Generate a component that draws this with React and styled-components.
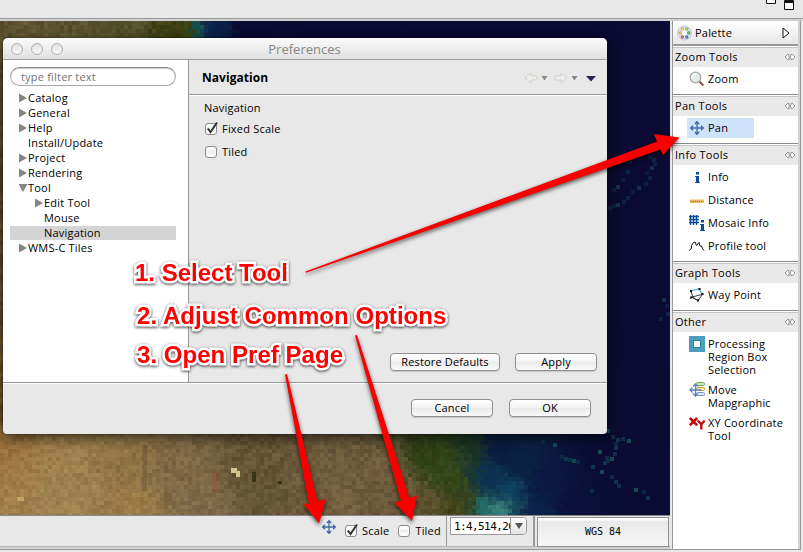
import React from "react";
import styled, { createGlobalStyle } from "styled-components";

const Global = createGlobalStyle`
  * { box-sizing: border-box; }
  body { margin: 0; overflow: hidden; background: #e8e8e8; }
`;

const Window = styled.div`
  position: relative;
  width: 803px;
  height: 552px;
  background: #e8e8e8;
  color: #000;
  font: 11px/15px "Open Sans", "Noto Sans", sans-serif;
  letter-spacing: 0.2px;
  white-space: nowrap;
  overflow: hidden;
`;
const Label = styled.span`
  font-size: ${(p) => p.$size || 11}px;
  letter-spacing: ${(p) => (p.$track === undefined ? 0.2 : p.$track)}px;
  font-weight: ${(p) => (p.$bold ? 700 : 400)};
  color: ${(p) => p.$color || "#000"};
`;
const TopBar = styled.header`
  height: 21px;
  display: flex;
  justify-content: flex-end;
  border-bottom: 2px solid #d0d0d0;
  box-shadow: inset 0 -1px #999;
  padding-right: 7px;
`;
const Workbench = styled.main`
  display: flex;
  width: 801px;
  height: 529px;
  border-right: 1px solid #999;
  border-bottom: 1px solid #999;
`;
const Editor = styled.section`
  width: 670px;
  display: flex;
  flex-direction: column;
`;
const MapView = styled.div`
  position: relative;
  height: 494px;
  overflow: hidden;
  background: #0a0a34;
`;
const MapCanvas = styled.svg`
  display: block;
`;

/* Terrain: colours blended between sampled places, [x, y, r, g, b, reach] */
const TERRAIN = [
  [0, 4, 94, 84, 48, 1], [70, 10, 88, 82, 47, 1], [130, 4, 84, 82, 42, 1], [165, 10, 60, 62, 18, 1],
  [183, 10, 58, 66, 14, 0.5], [196, 8, 18, 84, 82, 0.35], [210, 8, 10, 34, 80, 0.6], [223, 6, 12, 32, 74, 0.4],
  [245, 8, 10, 10, 50, 1], [400, 8, 10, 10, 50, 3], [660, 8, 10, 10, 50, 3],
  [0, 120, 86, 72, 42, 1], [0, 260, 98, 78, 42, 1.3], [0, 380, 110, 84, 46, 1],
  [640, 120, 10, 10, 50, 3], [640, 260, 10, 10, 50, 3], [640, 380, 10, 12, 50, 2],
  [0, 425, 154, 112, 62, 1], [20, 455, 162, 124, 74, 1], [60, 470, 158, 130, 80, 1.3], [120, 440, 145, 118, 70, 1], [130, 485, 156, 126, 74, 1],
  [180, 455, 126, 104, 68, 1], [200, 485, 126, 106, 72, 1], [255, 440, 100, 84, 52, 1], [260, 480, 102, 86, 56, 1],
  [320, 445, 110, 92, 60, 1], [330, 485, 116, 96, 62, 1], [380, 450, 112, 92, 62, 1], [400, 480, 108, 90, 58, 1], [425, 484, 92, 80, 46, 0.9],
  [425, 430, 48, 62, 22, 0.9], [440, 440, 48, 72, 24, 0.8], [455, 455, 54, 72, 24, 0.8], [450, 485, 70, 70, 26, 0.8],
  [466, 480, 50, 64, 28, 0.5], [468, 425, 26, 52, 34, 0.7], [468, 450, 26, 54, 46, 0.6], [480, 485, 34, 108, 108, 0.55], [497, 488, 58, 132, 124, 0.6],
  [485, 455, 10, 48, 84, 0.8], [510, 465, 14, 66, 98, 0.6], [515, 484, 20, 70, 90, 0.5], [520, 440, 10, 34, 66, 0.9], [500, 425, 10, 28, 62, 0.8],
  [535, 488, 10, 34, 74, 0.9], [550, 460, 10, 24, 66, 1], [580, 480, 10, 16, 58, 1.2], [610, 450, 10, 12, 50, 1.2], [655, 480, 10, 10, 50, 2],
];
const rand = (x, y) => {
  const n = Math.sin(x * 127.1 + y * 311.7) * 43758.5453;
  return n - Math.floor(n);
};
const shade = (x, y) => {
  let r = 0, g = 0, b = 0, total = 0;
  const jx = x + (rand(x + 3, y) - 0.5) * 9;
  const jy = y + (rand(x, y + 7) - 0.5) * 9;
  for (const [px, py, pr, pg, pb, reach] of TERRAIN) {
    const d = ((jx - px) ** 2 + (jy - py) ** 2) / (reach * reach) + 130;
    const w = 1 / (d * d);
    r += pr * w; g += pg * w; b += pb * w; total += w;
  }
  r /= total; g /= total; b /= total;
  const land = Math.min(1, Math.max(0.04, (r - 10) / 70));
  const n = (rand(x, y) - 0.5) * 20 + (rand(Math.floor((x + y / 2) / 11), Math.floor(y / 9)) - 0.5) * 7;
  return `rgb(${[r + n * land, g + n * land, b + n * 0.7 * land].map((v) => Math.max(0, Math.round(v))).join(",")})`;
};
const cells = [];
for (let y = 0; y < 494; y += 4)
  for (let x = 0; x < 670; x += 4)
    if (y < 20 || y > 408 || x < 4 || x > 600) cells.push([x, y, shade(x, y)]);

/* Reefs and islands: [x, y] */
const REEFS = [
  [640, 153], [632, 154], [636, 153], [648, 155], [652, 158], [653, 162], [650, 166], [645, 171], [648, 176], [644, 182], [637, 186], [631, 190], [626, 196], [622, 200], [616, 203], [612, 204], [608, 206],
  [612, 188], [616, 185], [621, 178], [626, 170], [628, 160], [662, 298], [665, 304], [666, 312], [659, 317],
  [606, 429], [611, 435], [616, 438], [621, 437], [627, 439], [614, 442], [614, 446], [613, 452], [610, 457], [606, 459], [603, 461],
  [541, 440], [553, 443], [560, 455], [564, 457], [568, 458], [572, 459], [576, 460], [591, 465], [605, 456], [600, 470], [610, 475], [614, 480], [617, 484], [634, 488], [642, 490], [646, 496], [590, 489], [598, 450],
].map(([x, y], i) => [x, y - 21, ["#10384c", "#0d2f49", "#174c54", "#0f2a46"][i % 4], y > 420 ? 0.95 : 0.6]);

const Terrain = () => (
  <MapCanvas width="670" height="494" shapeRendering="crispEdges">
    {cells.map(([x, y, c]) => <rect key={x + "-" + y} x={x} y={y} width="4" height="4" fill={c} />)}
    {REEFS.map(([x, y, c, o]) => <rect key={x + "r" + y} x={x} y={y} width="4" height="4" fill={c} opacity={o} />)}
    <path d="M231 447h6v3h3v6h-4v-4h-5z" fill="#d8c490" />
    <path d="M142 424h5v46h-5z" fill="#655536" opacity=".5" />
    <path d="M212 450h8v22h-8z" fill="#8a4c34" opacity=".4" />
    <path d="M17 476h7v4h-7z" fill="#c6a263" />
    <path d="M278 460h4v3h-4zM252 451h4v10h-4z" fill="#35351a" />
  </MapCanvas>
);

/* Preferences dialog */
const Dialog = styled.div`
  position: absolute;
  left: 3px;
  top: 17px;
  width: 604px;
  height: 396px;
  border-radius: 5px 5px 4px 4px;
  background: #e8e8e8;
  box-shadow: 0 4px 14px rgba(0, 0, 0, 0.6), 0 0 2px rgba(0, 0, 0, 0.5);
  display: flex;
  flex-direction: column;
  overflow: hidden;
`;
const TitleBar = styled.div`
  height: 22px;
  flex: none;
  display: grid;
  grid-template-columns: 1fr auto 1fr;
  align-items: center;
  padding: 1px 1px 0 8px;
  background: linear-gradient(#fbfbfb, #e0e0e0);
  border-bottom: 1px solid #a0a0a0;
  ${Label} { margin-left: -8px; }
`;
const Lights = styled.div`
  display: flex;
  gap: 8px;
`;
const Light = styled.i`
  width: 12px;
  height: 12px;
  border-radius: 50%;
  border: 1px solid #b0b0b0;
  background: linear-gradient(#e0e0e0, #fafafa);
`;
const DialogBody = styled.div`
  height: 323px;
  display: flex;
  border-bottom: 1px solid #999;
`;
const Sidebar = styled.div`
  width: 186px;
  flex: none;
  background: #fff;
  border-right: 1px solid #999;
  padding: 7px 12px 0 7px;
`;
const Search = styled.div`
  height: 19px;
  border-radius: 10px;
  border: 1px solid #aaa;
  border-top-color: #888;
  box-shadow: inset 0 1px 1px #ccc;
  padding: 1px 10px;
  line-height: 15px;
  margin-bottom: 4px;
`;
const TreeRow = styled.div`
  height: 15px;
  display: flex;
  align-items: center;
  padding-left: ${(p) => 8 + p.$level * 16}px;
  background: ${(p) => (p.$selected ? "linear-gradient(#fff 1px, #d4d4d4 1px)" : "none")};
`;
const Twisty = styled.svg`
  width: 10px;
  height: 10px;
  flex: none;
  fill: #868686;
`;
const Page = styled.div`
  flex: 1;
  display: flex;
  flex-direction: column;
`;
const PageHeader = styled.div`
  height: 35px;
  display: flex;
  align-items: center;
  justify-content: space-between;
  padding: 0 9px 0 13px;
  border-bottom: 1px solid #999;
`;
const PageBody = styled.div`
  flex: 1;
  display: flex;
  flex-direction: column;
  border-top: 1px solid #fff;
  padding: 4px 10px 11px 15px;
`;
const CheckRow = styled.label`
  display: flex;
  align-items: center;
  gap: 4px;
  height: 17px;
  margin-top: ${(p) => p.$top || 0}px;
`;
const Box = styled.svg`
  width: 14px;
  height: 16px;
  flex: none;
`;
const ButtonRow = styled.div`
  display: flex;
  justify-content: flex-end;
  gap: ${(p) => p.$gap}px;
  margin-top: auto;
`;
const PushButton = styled.button`
  width: ${(p) => p.$width}px;
  height: 18px;
  padding: 0 0 1px;
  border: 1px solid #8f8f8f;
  border-radius: 4px;
  background: linear-gradient(#fff, #f1f1f1 50%, #e9e9e9 51%, #fafafa);
  box-shadow: 0 1px 1px rgba(0, 0, 0, 0.15);
  font: inherit;
  line-height: 15px;
`;
const DialogFooter = styled.div`
  flex: 1;
  border-top: 1px solid #fff;
  padding: 15px 16px 0 0;
`;

const Check = ({ checked }) => (
  <Box viewBox="0 0 14 16">
    <rect x="1.500" y="2.500" width="11" height="11" rx="2.500" fill="#fafafa" stroke="#8b8b8b" />
    <path d="M3 8h8" stroke="#eee" strokeWidth="3" />
    {checked && <path d="M3.800 7.500l2.700 3.500L13 1.500" fill="none" stroke="#333" strokeWidth="2" />}
  </Box>
);
const Tree = [
  ["Catalog", 0, "closed"], ["General", 0, "closed"], ["Help", 0, "closed"], ["Install/Update", 0, ""],
  ["Project", 0, "closed"], ["Rendering", 0, "closed"], ["Tool", 0, "open"], ["Edit Tool", 1, "closed"],
  ["Mouse", 1, ""], ["Navigation", 1, ""], ["WMS-C Tiles", 0, "closed"],
];
const NavIcons = () => (
  <svg width="74" height="14" viewBox="0 0 74 14">
    <path d="M1 8l6-5v3h6v4H7v3zM43 8l-6-5v3h-6v4h6v3z" fill="#eeeeea" stroke="#d0d0c8" />
    <path d="M17.500 6h6l-3 4.500zM47.500 6h6l-3 4.500z" fill="#888" />
    <path d="M62 6h10l-5 5.500z" fill="#28235c" />
  </svg>
);
const Preferences = () => (
  <Dialog>
    <TitleBar>
      <Lights><Light /><Light /><Light /></Lights>
      <Label $size={13} $track={0} $color="#868686">Preferences</Label>
    </TitleBar>
    <DialogBody>
      <Sidebar>
        <Search><Label $color="#747474">type filter text</Label></Search>
        {Tree.map(([name, level, state], i) => (
          <TreeRow key={i} $level={level} $selected={i === 9}>
            <Twisty viewBox="0 0 10 10">
              {state === "closed" && <path d="M1 .5l8 4.500-8 4.500z" />}
              {state === "open" && <path d="M.5 1h9l-4.500 8z" />}
            </Twisty>
            <Label>{name}</Label>
          </TreeRow>
        ))}
      </Sidebar>
      <Page>
        <PageHeader>
          <Label $size={12} $bold $track={0.05}>Navigation</Label>
          <NavIcons />
        </PageHeader>
        <PageBody>
          <Label>Navigation</Label>
          <CheckRow $top={5}><Check checked /><Label>Fixed Scale</Label></CheckRow>
          <CheckRow $top={6}><Check /><Label>Tiled</Label></CheckRow>
          <ButtonRow $gap={15}>
            <PushButton $width={110}><Label $track={0.15}>Restore Defaults</Label></PushButton>
            <PushButton $width={82}><Label>Apply</Label></PushButton>
          </ButtonRow>
        </PageBody>
      </Page>
    </DialogBody>
    <DialogFooter>
      <ButtonRow $gap={16}>
        <PushButton $width={82}><Label>Cancel</Label></PushButton>
        <PushButton $width={82}><Label>OK</Label></PushButton>
      </ButtonRow>
    </DialogFooter>
  </Dialog>
);

/* Status bar */
const StatusBar = styled.footer`
  height: 32px;
  display: flex;
  border-top: 1px solid #888;
  border-bottom: 1px solid #b4b4b4;
`;
const ToolOptions = styled.div`
  width: 447px;
  display: flex;
  align-items: flex-start;
  padding: 3px 0 0 321px;
  border-right: 1px solid #999;
`;
const OptionChecks = styled.div`
  display: flex;
  gap: 8px;
  padding: 3px 0 0 7px;
  ${CheckRow} { gap: 4px; }
`;
const ScaleArea = styled.div`
  width: 88px;
  border-right: 2px solid #999;
  padding: 1px 0 0 3px;
`;
const Combo = styled.div`
  display: flex;
  width: 77px;
  height: 18px;
  border: 1px solid #999;
  border-radius: 0 4px 4px 0;
  background: #fff;
`;
const ComboValue = styled.div`
  width: 60px;
  overflow: hidden;
  padding-left: 3px;
  border-right: 1px solid #999;
  font: 11px/17px "DejaVu Sans Mono", "Liberation Mono", monospace;
  letter-spacing: -0.6px;
`;
const ComboArrow = styled.div`
  flex: 1;
  display: flex;
  align-items: center;
  justify-content: center;
  border-radius: 0 3px 3px 0;
  background: linear-gradient(#fff, #e4e4e4);
`;
const CrsButton = styled.button`
  width: 132px;
  height: 30px;
  margin: 1px 0 0 2px;
  padding: 0;
  border: 1px solid #8f8f8f;
  background: linear-gradient(#fff 2px, #e9e9e9 3px, #f6f6f6);
  font: 10px/28px "DejaVu Sans Mono", "Liberation Mono", monospace;
`;
const Bottom = styled.div`
  flex: 1;
  background: #d2d2d2;
`;

/* Palette */
const Palette = styled.aside`
  width: 128px;
  margin-left: 2px;
  border-left: 1px solid #999;
  background: #fff;
`;
const PaletteTitle = styled.div`
  height: 25px;
  display: flex;
  align-items: center;
  gap: 3px;
  padding: 0 8px 0 4px;
  background: linear-gradient(#fff, #e7e7e7);
  border-bottom: 2px solid #999;
  svg:last-child { margin-left: auto; }
`;
const Drawers = styled.div`
  display: flex;
  flex-direction: column;
  gap: 1px;
  padding-top: 1px;
`;
const Drawer = styled.div`
  height: ${(p) => p.$height}px;
  border-bottom: ${(p) => (p.$last ? "none" : "1px solid #888")};
`;
const DrawerHeader = styled.div`
  height: 20px;
  display: flex;
  align-items: center;
  justify-content: space-between;
  padding: 0 2px 2px 2px;
  border-top: 1px solid #c4c4c4;
  background: #e9e9e9;
`;
const Items = styled.div`
  display: flex;
  flex-direction: column;
  align-items: flex-start;
  gap: 3px;
  padding: 2px 0 0 14px;
`;
const Item = styled.div`
  display: flex;
  align-items: flex-start;
  gap: 3px;
  min-width: ${(p) => (p.$selected ? 67 : 0)}px;
  min-height: 20px;
  padding: 2px 2px 1px;
  border-radius: 1px;
  line-height: 13px;
  white-space: pre;
  background: ${(p) => (p.$selected ? "#cfe2fb" : "transparent")};
  svg { flex: none; }
  span { margin-top: 1px; }
`;

const MoveIcon = () => (
  <svg width="16" height="16" viewBox="0 0 16 16" fill="none" stroke="#3b6aa5" strokeWidth="1.300">
    <path d="M8 2v12M2 8h12M5.800 4L8 1.700 10.200 4M5.800 12L8 14.300 10.200 12M4 5.800L1.700 8 4 10.200M12 5.800L14.300 8 12 10.200" />
  </svg>
);
const InfoMark = ({ x = 0, y = 0 }) => (
  <path transform={`translate(${x} ${y})`} fill="#0d4b98" d="M1 0h3v2.500H1zM0 4h4v6h1v1H0v-1h1V5H0z" />
);
const Icons = {
  zoom: (
    <svg width="16" height="16" viewBox="0 0 16 16">
      <path d="M10 10l4.300 4.500" stroke="#806656" strokeWidth="2.300" />
      <circle cx="6.500" cy="6.500" r="5.300" fill="#e4eced" stroke="#a9a9a6" strokeWidth="1.300" />
      <path d="M3.500 6a3 3 0 0 1 3-3" stroke="#fff" strokeWidth="1.500" fill="none" />
    </svg>
  ),
  pan: <MoveIcon />,
  info: <svg width="16" height="16"><InfoMark x={6} y={3} /></svg>,
  distance: (
    <svg width="16" height="16">
      <path d="M1 7h14v4H1z" fill="#e8b865" />
      <path d="M1 7.500h14" stroke="#f7dda1" />
      <path d="M2.500 9v2M4.500 9v2M6.500 9v2M8.500 9v2M10.500 9v2M12.500 9v2" stroke="#a47731" strokeDasharray="1 1" />
    </svg>
  ),
  mosaic: (
    <svg width="16" height="16">
      <path d="M1.500 0v10M4.500 0v10M7.500 0v10M0 1.500h10M0 4.500h10M0 7.500h10" stroke="#0d4b98" strokeWidth="1.400" />
      <g transform="translate(11 5)"><InfoMark /></g>
    </svg>
  ),
  profile: (
    <svg width="16" height="16" fill="none" stroke="#111">
      <path d="M.5 12.500l2-2.500v-2.500l2-3 1.500-.5 1.500 3.500 2.500-3 1 3.500 1.500 0 1 2.500 1.500 2" />
    </svg>
  ),
  way: (
    <svg width="16" height="16" fill="none">
      <path d="M3 3.500l7-1.500 3 5" stroke="#28b4e4" strokeWidth="1.200" />
      <path d="M2 4l2 6.500 5 3 4.500-6M13 7.500L3 10M9 13.500L2 10" stroke="#222" strokeWidth=".9" />
      <path d="M1 3h2v2H1zM9.500 1h2v2h-2zM12.500 6h2v2h-2zM1 9.500h2v2H1zM8 12.500h2v2H8z" fill="#111" />
    </svg>
  ),
  region: (
    <svg width="16" height="16">
      <path d="M0 0h16v16H0z" fill="#4d9dbe" />
      <path d="M4.500 4.500h7v7h-7z" fill="#fff" stroke="#307f9c" />
    </svg>
  ),
  mapgraphic: (
    <svg width="16" height="16">
      <rect x="7.500" y=".5" width="8" height="3" rx="1" fill="#cfe3b9" stroke="#73a35b" />
      <rect x="7.500" y="5.500" width="8" height="3" rx="1" fill="#fce9a2" stroke="#c09c3a" />
      <rect x="7.500" y="10.500" width="8" height="3" rx="1" fill="#dae7f8" stroke="#7897c3" />
      <path d="M1 8h11M6.500 2v12M3.500 5.500L1 8l2.500 2.500M4 4.500L6.500 2 9 4.500M4 11.500L6.500 14 9 11.500" stroke="#5f82bd" fill="none" strokeWidth="1.300" />
    </svg>
  ),
  xy: (
    <svg width="16" height="16" fill="none" stroke="#c30b0b">
      <path d="M.8 3l7.400 7.400M8.200 3L.8 10.400" strokeWidth="2.600" />
      <path d="M8.800 5.500l3.500 3.800 3.500-3.800M12.300 9V14.500" strokeWidth="2.400" />
    </svg>
  ),
};
const PaletteIcon = () => (
  <svg width="15" height="16" viewBox="0 0 15 16">
    <circle cx="7.500" cy="8" r="7" fill="#d5e3f5" stroke="#c0cbe0" />
    <circle cx="7.500" cy="8" r="3" fill="#f5f9fd" />
    {[[5.3, 4, "#f0ad18"], [9.7, 4, "#98b71d"], [3.3, 8, "#f0a21a"], [11.7, 8, "#37a03a"], [5.3, 12, "#e24424"], [9.7, 12, "#2369b8"]].map(([x, y, c]) => (
      <circle key={c} cx={x} cy={y} r="1.100" fill="#fff" stroke={c} strokeWidth="1.100" />
    ))}
  </svg>
);
const Pin = () => (
  <svg width="12" height="8" viewBox="0 0 12 8" fill="#fff" stroke="#8c8c86" strokeWidth=".9">
    <path d="M4 1L1 4l3 3 2-1.500L8 7l3-3-3-3-2 1.500zM4 2.500l3.500 3M7.500 2.500L4 5.500" />
  </svg>
);
const DRAWERS = [
  ["Zoom Tools", 48, [["zoom", "Zoom"]]],
  ["Pan Tools", 48, [["pan", "Pan"]]],
  ["Info Tools", 117, [["info", "Info"], ["distance", "Distance"], ["mosaic", "Mosaic Info"], ["profile", "Profile tool"]]],
  ["Graph Tools", 48, [["way", "Way Point"]]],
  ["Other", 190, [["region", "Processing\nRegion Box\nSelection"], ["mapgraphic", "Move\nMapgraphic"], ["xy", "XY Coordinate\nTool"]]],
];
const RightEdge = styled.div`
  width: 2px;
  background: #d2d2d2;
`;

/* Callouts drawn above the whole window */
const Callout = styled.div`
  position: absolute;
  left: ${(p) => p.$x}px;
  top: ${(p) => p.$y}px;
  font: bold 24px/28px "Liberation Sans", Arial, sans-serif;
  letter-spacing: ${(p) => p.$track}px;
  color: #f00;
  -webkit-text-stroke: 5px #fff;
  paint-order: stroke fill;
  filter: drop-shadow(0 1px 1.5px rgba(0, 0, 0, 0.75));
`;
const Arrows = styled.svg`
  position: absolute;
  inset: 0;
  fill: #f90000;
  filter: drop-shadow(0 2px 2px rgba(0, 0, 0, 0.65));
`;

export default function App() {
  return (
    <Window>
      <Global />
      <TopBar>
        <svg width="30" height="12" fill="#fff" stroke="#111">
          <path d="M.5-2h9v5.500h-9zM18.500.5h9v9h-9z" />
          <path d="M18 2h10" strokeWidth="2" />
        </svg>
      </TopBar>
      <Workbench>
        <Editor>
          <MapView>
            <Terrain />
            <Preferences />
          </MapView>
          <StatusBar>
            <ToolOptions>
              <MoveIcon />
              <OptionChecks>
                <CheckRow><Check checked /><Label>Scale</Label></CheckRow>
                <CheckRow><Check /><Label>Tiled</Label></CheckRow>
              </OptionChecks>
            </ToolOptions>
            <ScaleArea>
              <Combo>
                <ComboValue>1:4,514,26</ComboValue>
                <ComboArrow><svg width="8" height="6"><path d="M0 0h8L4 6z" fill="#555" /></svg></ComboArrow>
              </Combo>
            </ScaleArea>
            <CrsButton>WGS 84</CrsButton>
          </StatusBar>
          <Bottom />
        </Editor>
        <Palette>
          <PaletteTitle>
            <PaletteIcon />
            <Label>Palette</Label>
            <svg width="8" height="12"><path d="M1 1v10l6-5z" fill="#fff" stroke="#111" /></svg>
          </PaletteTitle>
          <Drawers>
            {DRAWERS.map(([title, height, items], i) => (
              <Drawer key={title} $height={height} $last={i === 4}>
                <DrawerHeader><Label $track={0.3}>{title}</Label><Pin /></DrawerHeader>
                <Items>
                  {items.map(([icon, name]) => (
                    <Item key={name} $selected={icon === "pan"}>{Icons[icon]}<Label>{name}</Label></Item>
                  ))}
                </Items>
              </Drawer>
            ))}
          </Drawers>
        </Palette>
        <RightEdge />
      </Workbench>
      <Callout $x={135} $y={259} $track={0}>1. Select Tool</Callout>
      <Callout $x={137} $y={302} $track={0.04}>2. Adjust Common Options</Callout>
      <Callout $x={137} $y={341} $track={0.04}>3. Open Pref Page</Callout>
      <Arrows width="803" height="552">
        <path d="M305.500 271.500L657 141.500 654 134 679.500 137.500 663 155 660.500 149.500 306 272.800z" />
        <path d="M355 335.500L357 335 409.500 498 417 495.500 412 521 394 502.500 401 501z" />
        <path d="M285 374.500L287 374 317.500 501.500 326 499 319 523.500 303 503.500 309 504z" />
      </Arrows>
    </Window>
  );
}
